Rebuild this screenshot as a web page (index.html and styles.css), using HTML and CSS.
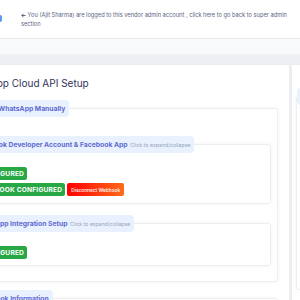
FILE: index.html
```html
<!DOCTYPE html>
<html>
<head>
	<title>WhatsApp Cloud API Setup</title>
	<link rel="stylesheet" href="styles.css">
</head>
<body>
	<div class="topbar">
		<button class="toggler"></button>
		<a class="impersonate" href="#"><svg class="arrow" viewBox="0 0 10 10" width="5" height="5"><path d="M5 1.5 1.5 5 5 8.5M1.8 5H9" fill="none" stroke="currentColor" stroke-width="2"/></svg> You (Ajit Sharma) are logged to this vendor admin account , click here to go back to super admin section</a>
	</div>
	<div class="subbar"></div>
	<div class="content">
		<div class="card main-card">
			<h3 class="card-title">WhatsApp Cloud API Setup</h3>
			<fieldset class="box">
				<legend>Setup WhatsApp Manually</legend>
				<fieldset class="box inner">
					<legend>Facebook Developer Account &amp; Facebook App <small>Click to expand/collapse</small></legend>
					<div class="badge-row first">
						<span class="badge">Configured</span>
					</div>
					<div class="badge-row">
						<span class="badge">Webhook Configured</span>
						<button class="btn-danger">Disconnect Webhook</button>
					</div>
				</fieldset>
				<fieldset class="box inner">
					<legend>Whatsapp Integration Setup <small>Click to expand/collapse</small></legend>
					<div class="badge-row first">
						<span class="badge">Configured</span>
					</div>
				</fieldset>
			</fieldset>
			<fieldset class="box next">
				<legend>Webhook Information</legend>
			</fieldset>
		</div>
		<div class="card side-card">
			<fieldset class="box side">
				<legend>Test</legend>
			</fieldset>
		</div>
	</div>
</body>
</html>
```

FILE: styles.css
```css
body {
	margin: 0;
	width: 300px;
	height: 300px;
	overflow: hidden;
	font-family: Inter, "Open Sans", sans-serif;
	background-color: #eef0f4;
}
.topbar {
	height: 38px;
	background-color: #fff;
	border-bottom: 1px solid #e6e9ee;
	display: flex;
	align-items: flex-start;
}
.toggler {
	flex: none;
	width: 14px;
	height: 7px;
	margin: 15px 0 0 -12px;
	padding: 0;
	border: 0;
	border-radius: 2px;
	background-color: #5b9bf0;
}
.impersonate {
	flex: none;
	width: 276px;
	margin: 10px 0 0 19px;
	font-size: 5.7px;
	line-height: 9px;
	color: #5a6482;
	text-decoration: none;
}
.arrow {
	vertical-align: -0.5px;
}
.subbar {
	height: 15px;
	background-color: #f8f9fb;
}
.content {
	display: flex;
	gap: 3px;
	margin-left: -48px;
	padding-top: 11px;
}
.card {
	background-color: #fff;
	box-shadow: 0 0 3px rgba(0, 0, 0, 0.04);
	height: 300px;
}
.main-card {
	flex: none;
	width: 337px;
	box-sizing: border-box;
	padding: 12px 11px 0 8px;
}
.side-card {
	flex: 1;
	padding: 23px 0 0 4px;
}
.card-title {
	margin: 0 0 11px;
	font-size: 10px;
	line-height: 12px;
	font-weight: 400;
	color: #32325d;
}
fieldset.box {
	min-width: 0;
	margin: 0 0 0 6px;
	padding: 0 6px 15px;
	border: 1px solid #eceef2;
	border-radius: 3px;
	box-shadow: 0 0 4px rgba(0, 0, 0, 0.05);
}
fieldset.inner {
	margin: 19px 0 0;
	padding: 0 6px 7px 1.5px;
}
fieldset.inner legend {
	margin-left: -5px;
}
fieldset.inner + fieldset.inner {
	margin-top: 11px;
	padding-bottom: 6px;
}
fieldset.next {
	margin-top: 8px;
}
fieldset.side {
	margin: 0;
	padding: 0;
	height: 200px;
}
legend {
	padding: 0 4px;
	line-height: 17px;
	font-size: 6.8px;
	font-weight: 700;
	color: #5e6ad2;
	background-color: #e9f1fe;
	border-radius: 4px;
}
legend small {
	margin-left: 1px;
	font-size: 5.2px;
	line-height: 1;
	font-weight: 400;
	color: #94a3b8;
}
.badge-row {
	display: flex;
	gap: 2px;
	margin-top: 3px;
}
.badge-row.first {
	margin-top: 14px;
}
.badge {
	padding: 2.5px 3px;
	font-size: 6.6px;
	line-height: 8px;
	font-weight: 700;
	letter-spacing: 0.2px;
	text-transform: uppercase;
	color: #fff;
	background-color: #28a745;
	border-radius: 2.5px;
}
.btn-danger {
	height: 13px;
	padding: 0 4px;
	border: 0;
	border-radius: 2px;
	font-family: inherit;
	font-size: 4.8px;
	font-weight: 500;
	color: #fff;
	background: linear-gradient(90deg, #f00, #ff6a1a);
}
```
